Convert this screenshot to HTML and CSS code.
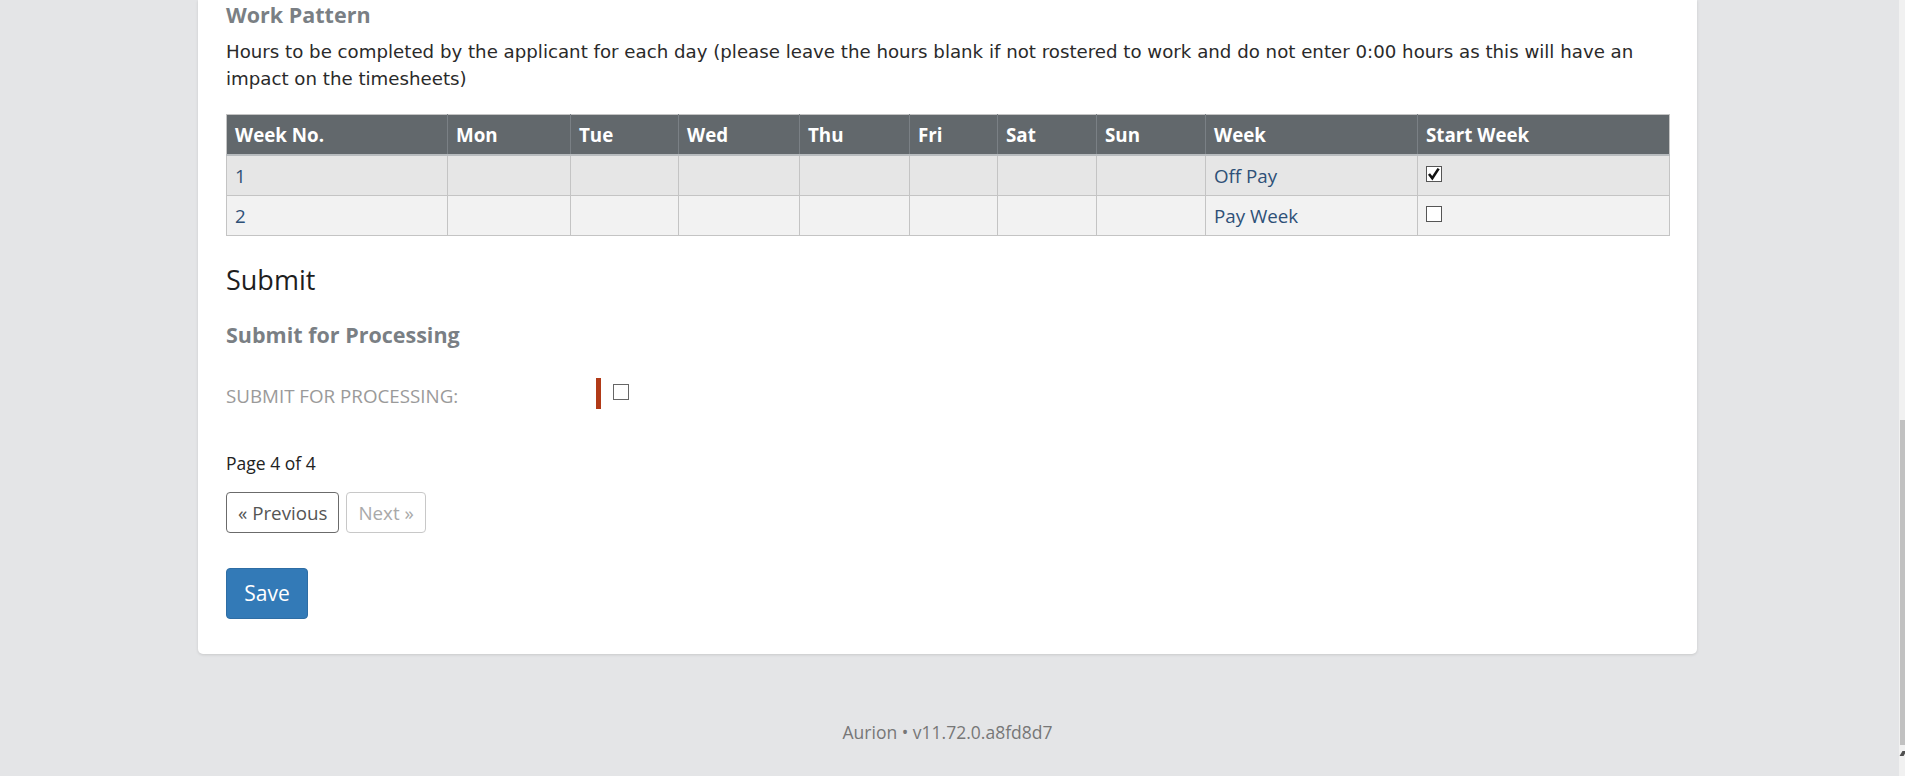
FILE: index.html
```html
<!DOCTYPE html>
<html lang="en">
<head>
<meta charset="utf-8">
<title>Work Pattern - Submit</title>
<link rel="stylesheet" href="styles.css">
</head>
<body>
<div class="page">
  <div class="card">
    <h3 class="sub-heading">Work Pattern</h3>
    <p class="hint">Hours to be completed by the applicant for each day (please leave the hours blank if not rostered to work and do not enter 0:00 hours as this will have an impact on the timesheets)</p>
    <table class="pattern">
      <colgroup>
        <col class="c-week"><col class="c-mon"><col class="c-tue"><col class="c-wed"><col class="c-thu"><col class="c-fri"><col class="c-sat"><col class="c-sun"><col class="c-wk"><col class="c-start">
      </colgroup>
      <thead>
        <tr><th>Week No.</th><th>Mon</th><th>Tue</th><th>Wed</th><th>Thu</th><th>Fri</th><th>Sat</th><th>Sun</th><th>Week</th><th>Start Week</th></tr>
      </thead>
      <tbody>
        <tr class="odd"><td>1</td><td></td><td></td><td></td><td></td><td></td><td></td><td></td><td>Off Pay</td><td><span class="cb cb-checked"><svg viewBox="0 0 16 16" width="16" height="16"><path d="M3 8 L6.3 12.2 L12.6 2.6" fill="none" stroke="#111" stroke-width="2.6" stroke-linejoin="miter"/></svg></span></td></tr>
        <tr class="even"><td>2</td><td></td><td></td><td></td><td></td><td></td><td></td><td></td><td>Pay Week</td><td><span class="cb"></span></td></tr>
      </tbody>
    </table>

    <h2 class="section-heading">Submit</h2>
    <h3 class="sub-heading sub-heading-gap">Submit for Processing</h3>

    <div class="field-row">
      <label class="field-label">SUBMIT FOR PROCESSING:</label>
      <div class="field-control">
        <span class="req-bar"></span>
        <span class="cb cb-field"></span>
      </div>
    </div>

    <div class="pager-info">Page 4 of 4</div>
    <div class="pager">
      <button class="btn btn-outline">« Previous</button>
      <button class="btn btn-outline btn-disabled">Next »</button>
    </div>
    <button class="btn-primary">Save</button>
  </div>
  <footer class="footer">Aurion • v11.72.0.a8fd8d7</footer>
</div>
<div class="scrollbar"><div class="scroll-thumb"></div><div class="scroll-arrow"></div></div>
</body>
</html>
```
FILE: styles.css
```css
html, body {
  margin: 0;
  padding: 0;
}
body {
  background: #e4e5e7;
  font-family: "Open Sans", "Liberation Sans", sans-serif;
  color: #222;
  overflow: hidden;
}
.page {
  padding-left: 198px;
}
.card {
  width: 1443px;
  background: #fff;
  border-radius: 0 0 5px 5px;
  box-shadow: 0 1px 3px rgba(0, 0, 0, 0.12);
  padding: 3px 28px 35px 28px;
}
.sub-heading {
  margin: 0;
  font-size: 21.5px;
  line-height: 24px;
  font-weight: 700;
  color: #7a7f84;
}
.hint {
  margin: 11px 0 0 0;
  font-family: "DejaVu Sans", Verdana, sans-serif;
  font-size: 18.2px;
  line-height: 27px;
  color: #2a2a2a;
}
.pattern {
  margin-top: 22px;
  width: 1443px;
  border-collapse: collapse;
  table-layout: fixed;
  border: 1px solid #c4c4c4;
}
.c-week { width: 221px; }
.c-mon { width: 123px; }
.c-tue { width: 108px; }
.c-wed { width: 121px; }
.c-thu { width: 110px; }
.c-fri { width: 88px; }
.c-sat { width: 99px; }
.c-sun { width: 109px; }
.c-wk { width: 212px; }
.c-start { width: 252px; }
.pattern th {
  background: #62686c;
  color: #fff;
  font-size: 18.75px;
  font-weight: 700;
  text-align: left;
  height: 38.5px;
  padding: 0 8px;
  border-left: 1px solid #7a8085;
  border-bottom: 2px solid #b8bcbf;
}
.pattern th:first-child { border-left: none; }
.pattern td {
  height: 39px;
  padding: 0 8px;
  font-size: 18.75px;
  color: #2e5077;
  border: 1px solid #c4c4c4;
}
.pattern tr.odd td { background: #e6e6e6; }
.pattern tr.even td { background: #f2f2f2; }
.cb {
  display: inline-block;
  box-sizing: border-box;
  width: 16px;
  height: 16px;
  border: 1px solid #555;
  background: #fff;
  vertical-align: middle;
  position: relative;
  top: -3px;
}
.cb svg {
  display: block;
  margin: -1px 0 0 -1px;
}
.section-heading {
  margin: 29px 0 0 0;
  font-size: 27px;
  line-height: 30px;
  font-weight: 400;
  color: #1e1e1e;
}
.sub-heading-gap {
  margin-top: 28px;
}
.field-row {
  display: flex;
  margin-top: 31px;
  height: 31px;
}
.field-label {
  width: 370px;
  margin-top: 6px;
  font-size: 18.75px;
  line-height: 24px;
  color: #9a9a9a;
}
.field-control {
  display: flex;
  align-items: flex-start;
  gap: 12px;
}
.req-bar {
  width: 5px;
  height: 31px;
  background: #b13a17;
}
.cb-field {
  width: 16px;
  height: 16px;
  border-color: #666;
  margin-top: 6px;
  top: 0;
}
.pager-info {
  margin-top: 43px;
  font-size: 17.5px;
  line-height: 22px;
  color: #222;
}
.pager {
  display: flex;
  gap: 7px;
  margin-top: 18px;
}
.btn {
  font-family: "Open Sans", "Liberation Sans", sans-serif;
  font-size: 18.75px;
  height: 41px;
  padding: 0 11px;
  background: #fff;
  border-radius: 4px;
  cursor: pointer;
}
.btn-outline {
  border: 1px solid #6b6b6b;
  color: #555;
}
.btn-disabled {
  border-color: #c8c8c8;
  color: #a9a9a9;
}
.btn-primary {
  display: block;
  margin-top: 35px;
  width: 82px;
  height: 51px;
  font-family: "Open Sans", "Liberation Sans", sans-serif;
  font-size: 21px;
  color: #fff;
  background: #337ab7;
  border: 1px solid #2e6da4;
  border-radius: 4px;
  padding: 0;
}
.footer {
  width: 1499px;
  margin-top: 66px;
  text-align: center;
  font-size: 17.5px;
  line-height: 24px;
  color: #777;
}
.scrollbar {
  position: fixed;
  top: 0;
  right: 0;
  width: 6px;
  height: 776px;
  background: #f1f1f1;
}
.scroll-thumb {
  position: absolute;
  top: 420px;
  left: 1px;
  right: 0;
  height: 325px;
  background: #c1c1c1;
}
.scroll-arrow {
  position: absolute;
  top: 751px;
  left: 2px;
  width: 4px;
  height: 5px;
  background: #505050;
  transform: skewX(-30deg);
}
```
